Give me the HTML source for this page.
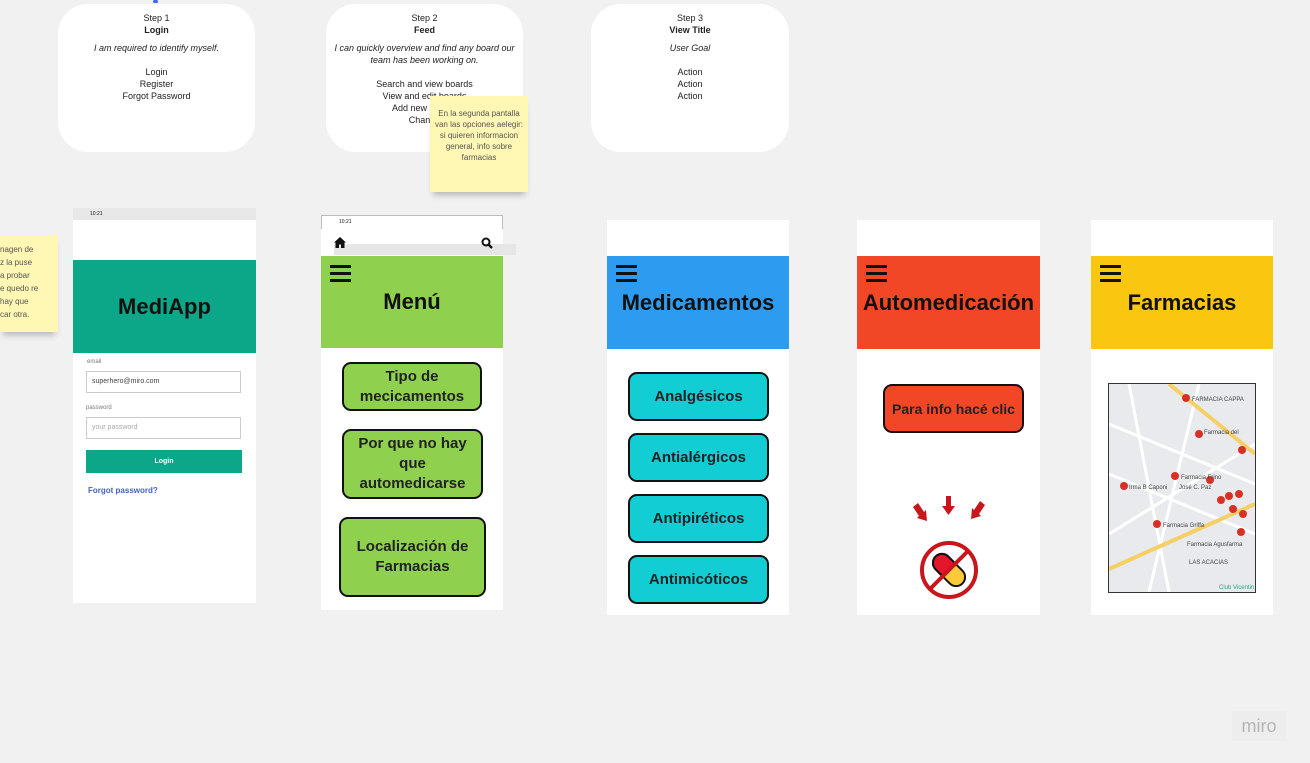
<!DOCTYPE html>
<html><head><meta charset="utf-8"><style>
body{margin:0;width:1310px;height:763px;background:#f1f1f1;position:relative;overflow:hidden;font-family:"Liberation Sans",sans-serif;color:#111}
.a{position:absolute}
.card{position:absolute;background:#fff;border-radius:30px;text-align:center;font-size:9px;line-height:12px;color:#222;padding-top:8px;box-sizing:border-box}
.card i{display:block;margin:6px 0 12px}
.sticky{position:absolute;background:#fff7b3;font-size:8px;line-height:11px;color:#555;box-shadow:0 6px 6px -3px rgba(0,0,0,.25)}
.scr{position:absolute;background:#fff}
.hdr{position:absolute;left:0;width:100%;display:flex;align-items:center;justify-content:center;font-weight:bold;font-size:22px}
.ham{position:absolute;left:9px;top:9px;width:21px}
.ham div{height:3px;background:#111;margin-bottom:4px}
.btn{position:absolute;border:2px solid #111;border-radius:9px;display:flex;align-items:center;justify-content:center;text-align:center;font-weight:bold;font-size:15px;line-height:20px;box-sizing:border-box;color:#222}
.g{background:#8fd14f}.c{background:#12cdd4}
</style></head><body>
<div class="a" style="left:153px;top:0;width:5px;height:3px;background:#4262ff;border-radius:3px"></div>
<div class="card" style="left:58px;top:4px;width:197px;height:148px">Step 1<br><b>Login</b><i>I am required to identify myself.</i>Login<br>Register<br>Forgot Password</div>
<div class="card" style="left:326px;top:4px;width:197px;height:148px">Step 2<br><b>Feed</b><i>I can quickly overview and find any board our team has been working on.</i>Search and view boards<br>View and edit boards<br>Add new boards<br>Change</div>
<div class="card" style="left:591px;top:4px;width:198px;height:148px">Step 3<br><b>View Title</b><i>User Goal</i>Action<br>Action<br>Action</div>
<div class="sticky" style="left:430px;top:96px;width:98px;height:96px;text-align:center;padding:12px 4px 0;box-sizing:border-box">En la segunda pantalla van las opciones aelegir: si quieren informacion general, info sobre farmacias</div>
<div class="sticky" style="left:0;top:235px;width:58px;height:97px;padding-top:8px;box-sizing:border-box;line-height:13px">nagen de<br>z la puse<br>a probar<br>e quedo re<br>hay que<br>car otra.</div>

<div class="scr" style="left:73px;top:208px;width:183px;height:395px">
<div class="a" style="left:0;top:0;width:183px;height:12px;background:#e8e8e8;font-size:5px;line-height:12px;padding-left:17px;box-sizing:border-box">10:21</div>
<div class="hdr" style="top:52px;height:93px;background:#0ca789">MediApp</div>
<div class="a" style="left:14px;top:151px;font-size:6px;color:#777">email</div>
<div class="a" style="left:13px;top:163px;width:155px;height:22px;border:1px solid #ccc;box-sizing:border-box;font-size:7px;line-height:20px;padding-left:5px;color:#444">superhero@miro.com</div>
<div class="a" style="left:13px;top:197px;font-size:6px;color:#777">password</div>
<div class="a" style="left:13px;top:209px;width:155px;height:22px;border:1px solid #ccc;box-sizing:border-box;font-size:7px;line-height:20px;padding-left:5px;color:#aaa">your password</div>
<div class="a" style="left:13px;top:242px;width:156px;height:23px;background:#0ca789;color:#fff;font-size:7px;font-weight:bold;text-align:center;line-height:23px">Login</div>
<div class="a" style="left:15px;top:278px;font-size:8px;font-weight:bold;color:#4262c8">Forgot password?</div>
</div>

<div class="scr" style="left:321px;top:215px;width:182px;height:395px">
<div class="a" style="left:0;top:0;width:182px;height:14px;border:1px solid #bbb;border-bottom:none;box-sizing:border-box;font-size:5px;line-height:12px;padding-left:17px">10:21</div>
<div class="a" style="left:13px;top:29px;width:182px;height:11px;background:#e6e6e6"></div>
<svg class="a" style="left:13px;top:22px" width="12" height="11" viewBox="0 0 12 11"><path d="M6 0L0 5.5h1.5V11h3.5V7.5h2V11h3.5V5.5H12z" fill="#111"/></svg>
<svg class="a" style="left:160px;top:22px" width="12" height="12" viewBox="0 0 12 12"><circle cx="5" cy="5" r="3.5" fill="none" stroke="#111" stroke-width="2"/><path d="M7.5 7.5L11 11" stroke="#111" stroke-width="2.4"/></svg>
<div class="hdr" style="top:41px;height:92px;background:#8fd14f"><div class="ham"><div></div><div></div><div></div></div>Menú</div>
<div class="btn g" style="left:21px;top:147px;width:140px;height:49px">Tipo de<br>mecicamentos</div>
<div class="btn g" style="left:21px;top:214px;width:141px;height:70px">Por que no hay<br>que<br>automedicarse</div>
<div class="btn g" style="left:18px;top:302px;width:147px;height:80px">Localización de<br>Farmacias</div>
</div>

<div class="scr" style="left:607px;top:220px;width:182px;height:395px">
<div class="hdr" style="top:36px;height:93px;background:#2d9bf0"><div class="ham"><div></div><div></div><div></div></div>Medicamentos</div>
<div class="btn c" style="left:21px;top:152px;width:141px;height:49px">Analgésicos</div>
<div class="btn c" style="left:21px;top:213px;width:141px;height:49px">Antialérgicos</div>
<div class="btn c" style="left:21px;top:274px;width:141px;height:49px">Antipiréticos</div>
<div class="btn c" style="left:21px;top:335px;width:141px;height:49px">Antimicóticos</div>
</div>

<div class="scr" style="left:857px;top:220px;width:183px;height:395px">
<div class="hdr" style="top:36px;height:93px;background:#f24726"><div class="ham"><div></div><div></div><div></div></div>Automedicación</div>
<div class="btn" style="left:26px;top:164px;width:141px;height:49px;background:#f24726;font-size:14px">Para info hacé clic</div>
<svg class="a" style="left:50px;top:273px;overflow:visible" width="90" height="110" viewBox="0 0 90 110">
<g fill="#c8161d"><path d="M6 14l5-4 6 9 2-2 1 11-10-3 2-2z"/><path d="M39 3h5v10h4l-6.5 9-6.5-9h4z"/><path d="M78 12l-5-4-6 9-2-2-1 11 10-3-2-2z"/></g>
<circle cx="42" cy="77" r="27" fill="#fff" stroke="#c8161d" stroke-width="4"/>
<g transform="rotate(-45 42 77)"><rect x="33" y="58" width="18" height="38" rx="9" fill="#fbca3a" stroke="#111" stroke-width="2"/><path d="M33 77v-10a9 9 0 0 1 18 0v10z" fill="#e3162a" stroke="#111" stroke-width="2"/></g>
<line x1="23" y1="96" x2="61" y2="58" stroke="#c8161d" stroke-width="4"/>
</svg>
</div>

<div class="scr" style="left:1091px;top:220px;width:182px;height:395px">
<div class="hdr" style="top:36px;height:93px;background:#fac710"><div class="ham"><div></div><div></div><div></div></div>Farmacias</div>
<svg class="a" style="left:17px;top:163px;border:1.5px solid #333" width="146" height="208" viewBox="0 0 146 208">
<rect width="146" height="208" fill="#e8eaed"/>
<g stroke="#fff" stroke-width="3"><path d="M0 40L146 100M0 90L146 150M20 0L60 208M90 0L40 208M0 150L146 60"/></g>
<path d="M60 0L146 70M0 185L146 120" stroke="#f6cf65" stroke-width="4" fill="none"/>
<g fill="#d93025"><circle cx="77" cy="14" r="4"/><circle cx="90" cy="50" r="4"/><circle cx="133" cy="66" r="4"/><circle cx="66" cy="92" r="4"/><circle cx="101" cy="96" r="4"/><circle cx="15" cy="102" r="4"/><circle cx="112" cy="116" r="4"/><circle cx="120" cy="112" r="4"/><circle cx="130" cy="110" r="4"/><circle cx="124" cy="125" r="4"/><circle cx="134" cy="130" r="4"/><circle cx="48" cy="140" r="4"/><circle cx="132" cy="148" r="4"/></g>
<g font-size="6" fill="#444" font-family="Liberation Sans"><text x="83" y="17">FARMACIA CAPPA</text><text x="95" y="50">Farmacia del</text><text x="72" y="95">Farmacia Frino</text><text x="20" y="105">Irma B Caponi</text><text x="70" y="105">José C. Paz</text><text x="54" y="143">Farmacia Griffa</text><text x="78" y="162">Farmacia Agusfarma</text><text x="80" y="180">LAS ACACIAS</text><text x="110" y="205" fill="#2a8">Club Vicentin</text></g>
</svg>
</div>
<div class="a" style="left:1232px;top:711px;width:54px;height:30px;background:#ededed;color:#b5b5b5;font-size:18px;text-align:center;line-height:30px">miro</div>
</body></html>
